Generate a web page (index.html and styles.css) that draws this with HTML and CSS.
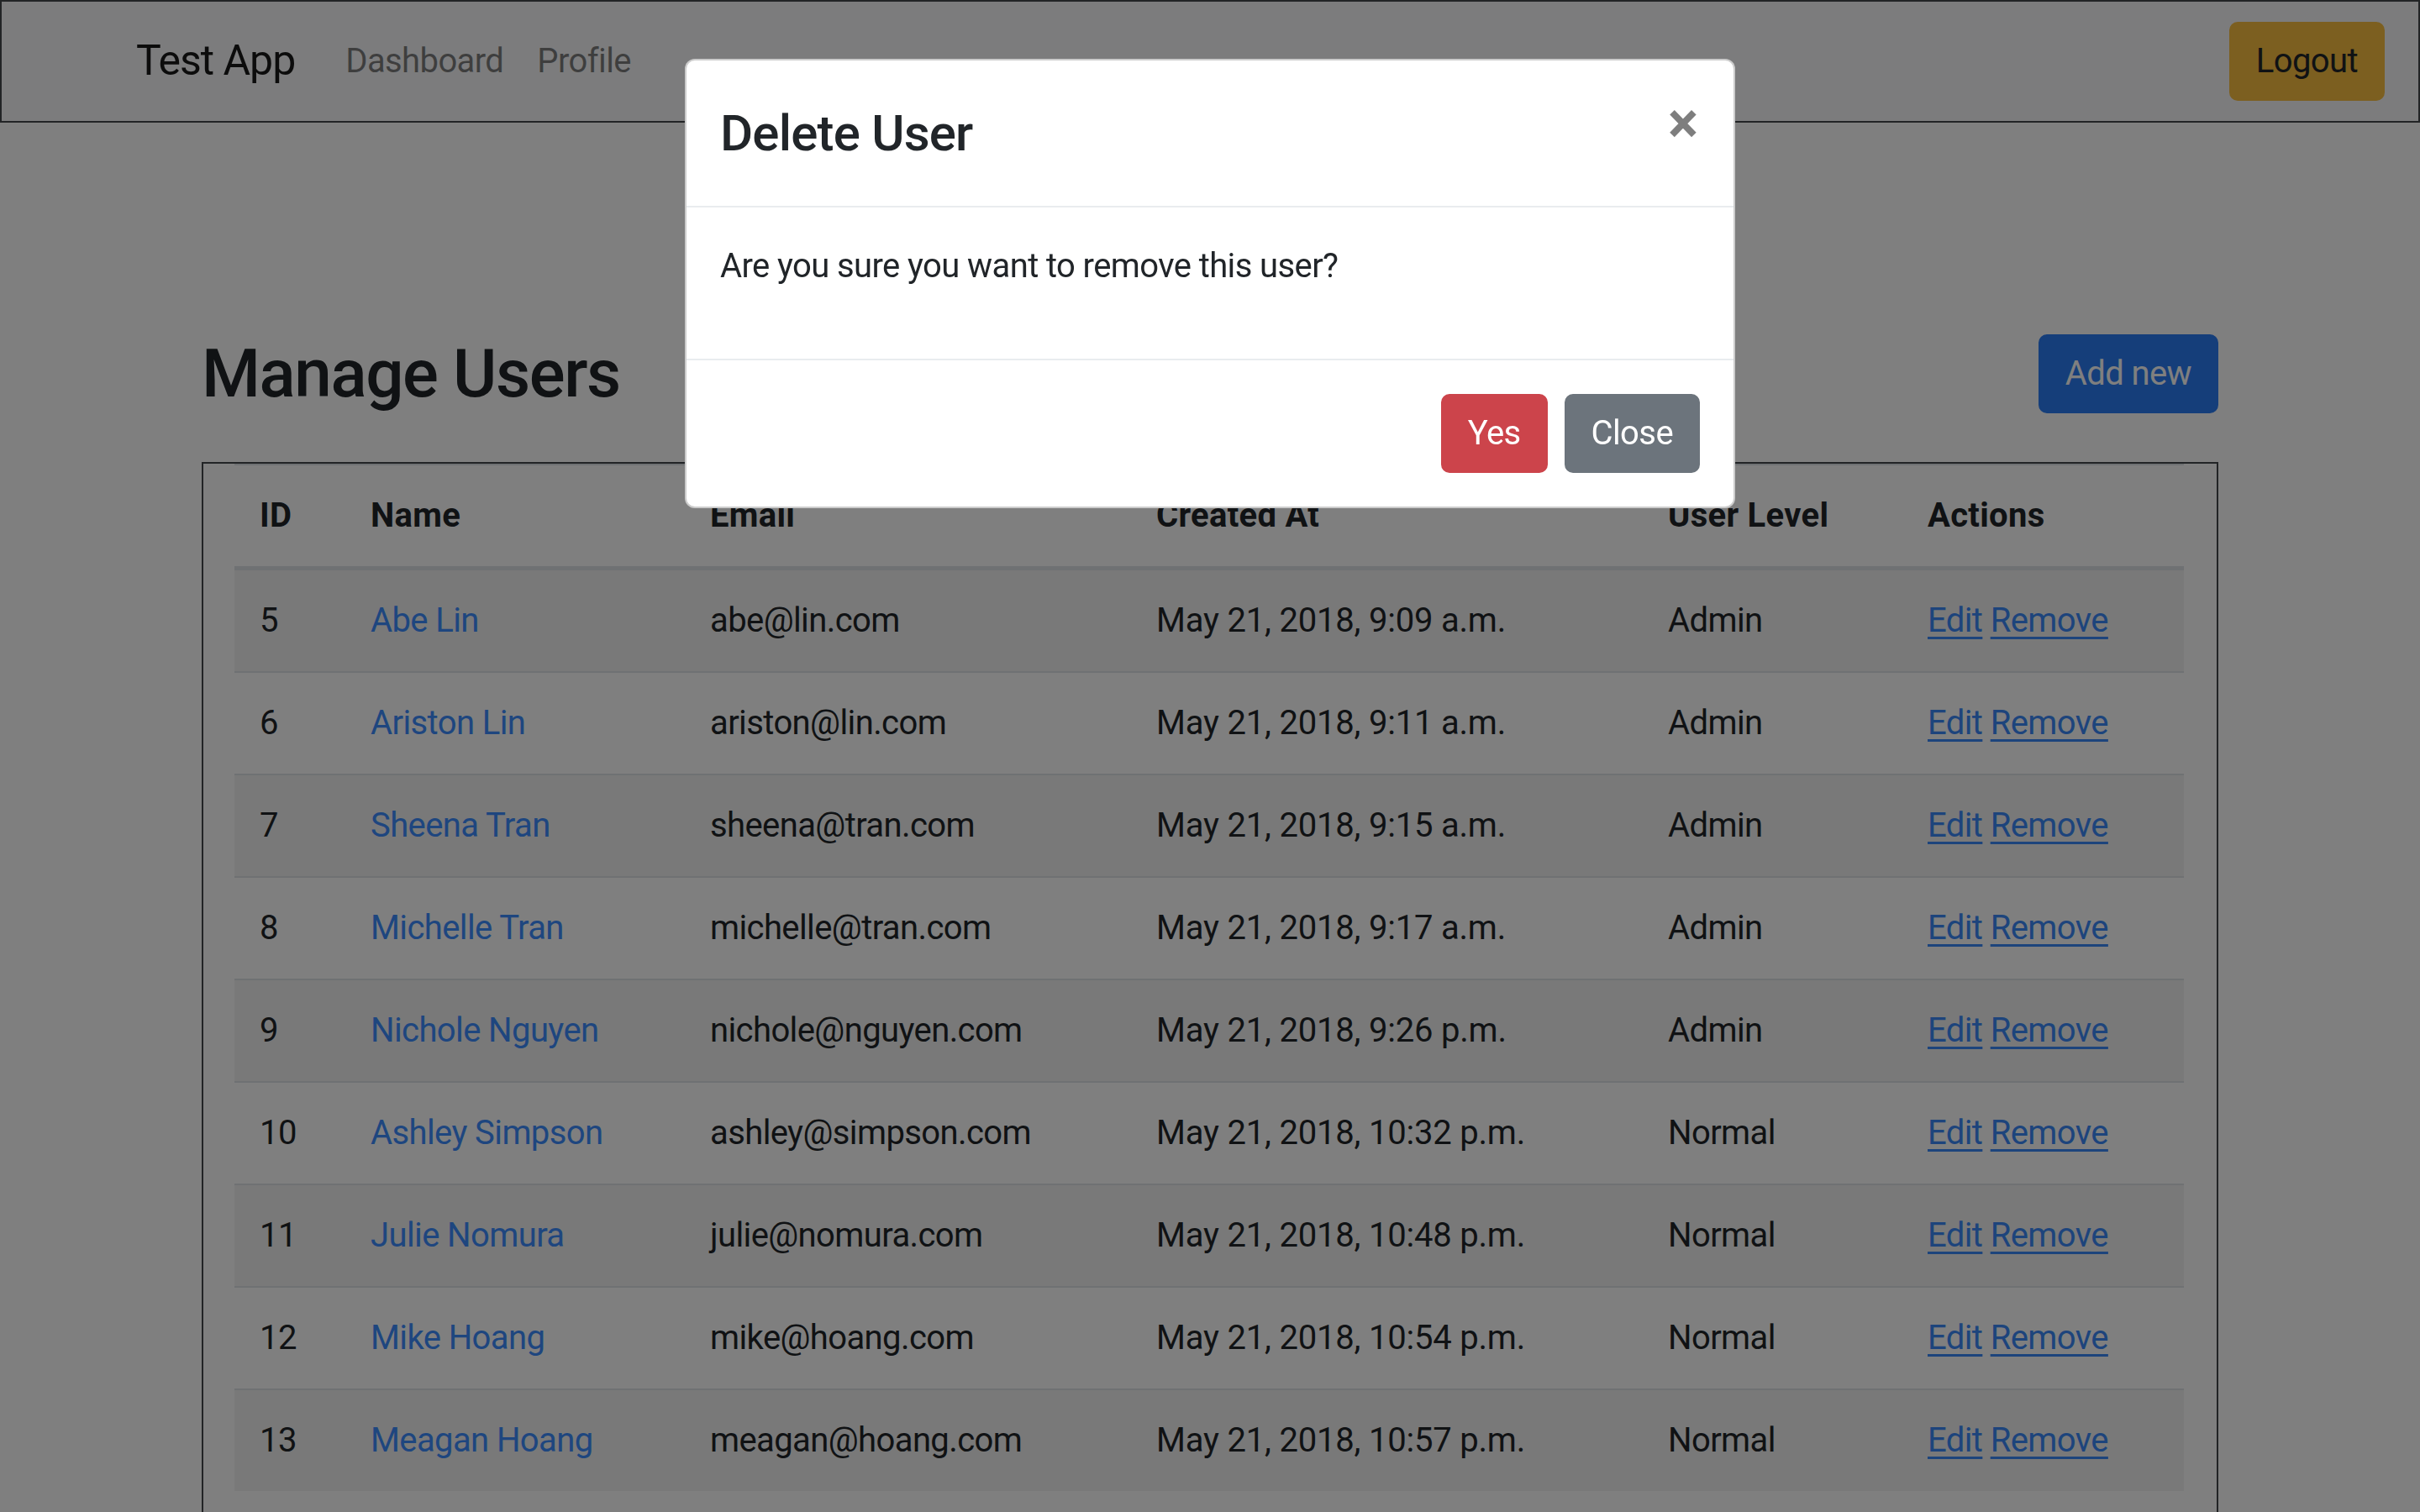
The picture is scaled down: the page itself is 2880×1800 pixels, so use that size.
FILE: index.html
```html
<!DOCTYPE html>
<html lang="en">
<head>
<meta charset="utf-8">
<title>Test App - Manage Users</title>
<link rel="stylesheet" href="styles.css">
</head>
<body class="modal-open">
  <nav class="navbar">
    <a class="navbar-brand" href="#">Test App</a>
    <ul class="navbar-nav">
      <li><a class="nav-link" href="#">Dashboard</a></li>
      <li><a class="nav-link" href="#">Profile</a></li>
    </ul>
    <button class="btn btn-warning logout" type="button">Logout</button>
  </nav>

  <main class="container">
    <div class="page-head">
      <h2 class="page-title">Manage Users</h2>
      <button class="btn btn-primary" type="button">Add new</button>
    </div>

    <div class="table-box">
      <table class="table">
        <colgroup>
          <col class="c-id"><col class="c-name"><col class="c-email"><col class="c-created"><col class="c-level"><col class="c-actions">
        </colgroup>
        <thead>
          <tr><th>ID</th><th>Name</th><th>Email</th><th>Created At</th><th>User Level</th><th>Actions</th></tr>
        </thead>
        <tbody>
          <tr><td>5</td><td><a class="name-link" href="#">Abe Lin</a></td><td>abe@lin.com</td><td class="date">May 21, 2018, 9:09 a.m.</td><td>Admin</td><td><a class="act" href="#">Edit</a> <a class="act" href="#">Remove</a></td></tr>
          <tr><td>6</td><td><a class="name-link" href="#">Ariston Lin</a></td><td>ariston@lin.com</td><td class="date">May 21, 2018, 9:11 a.m.</td><td>Admin</td><td><a class="act" href="#">Edit</a> <a class="act" href="#">Remove</a></td></tr>
          <tr><td>7</td><td><a class="name-link" href="#">Sheena Tran</a></td><td>sheena@tran.com</td><td class="date">May 21, 2018, 9:15 a.m.</td><td>Admin</td><td><a class="act" href="#">Edit</a> <a class="act" href="#">Remove</a></td></tr>
          <tr><td>8</td><td><a class="name-link" href="#">Michelle Tran</a></td><td>michelle@tran.com</td><td class="date">May 21, 2018, 9:17 a.m.</td><td>Admin</td><td><a class="act" href="#">Edit</a> <a class="act" href="#">Remove</a></td></tr>
          <tr><td>9</td><td><a class="name-link" href="#">Nichole Nguyen</a></td><td>nichole@nguyen.com</td><td class="date">May 21, 2018, 9:26 p.m.</td><td>Admin</td><td><a class="act" href="#">Edit</a> <a class="act" href="#">Remove</a></td></tr>
          <tr><td>10</td><td><a class="name-link" href="#">Ashley Simpson</a></td><td>ashley@simpson.com</td><td class="date">May 21, 2018, 10:32 p.m.</td><td>Normal</td><td><a class="act" href="#">Edit</a> <a class="act" href="#">Remove</a></td></tr>
          <tr><td>11</td><td><a class="name-link" href="#">Julie Nomura</a></td><td>julie@nomura.com</td><td class="date">May 21, 2018, 10:48 p.m.</td><td>Normal</td><td><a class="act" href="#">Edit</a> <a class="act" href="#">Remove</a></td></tr>
          <tr><td>12</td><td><a class="name-link" href="#">Mike Hoang</a></td><td>mike@hoang.com</td><td class="date">May 21, 2018, 10:54 p.m.</td><td>Normal</td><td><a class="act" href="#">Edit</a> <a class="act" href="#">Remove</a></td></tr>
          <tr><td>13</td><td><a class="name-link" href="#">Meagan Hoang</a></td><td>meagan@hoang.com</td><td class="date">May 21, 2018, 10:57 p.m.</td><td>Normal</td><td><a class="act" href="#">Edit</a> <a class="act" href="#">Remove</a></td></tr>
        </tbody>
      </table>
    </div>
  </main>

  <div class="modal-backdrop"></div>
  <div class="modal" role="dialog" aria-modal="true">
    <div class="modal-dialog">
      <div class="modal-content">
        <div class="modal-header">
          <h4 class="modal-title">Delete User</h4>
          <button class="close" type="button" aria-label="Close">&times;</button>
        </div>
        <div class="modal-body">
          <p>Are you sure you want to remove this user?</p>
        </div>
        <div class="modal-footer">
          <button class="btn btn-danger" type="button">Yes</button>
          <button class="btn btn-secondary" type="button">Close</button>
        </div>
      </div>
    </div>
  </div>
</body>
</html>
```

FILE: styles.css
```css
* { box-sizing: border-box; }

html, body { margin: 0; padding: 0; }

body {
  font-family: "Roboto", "Liberation Sans", sans-serif;
  font-size: 40px;
  line-height: 60px;
  letter-spacing: -0.6px;
  color: #212529;
  background: #ffffff;
}

.modal-open { overflow: hidden; height: 1800px; }

a { text-decoration: none; }

/* navbar */
.navbar {
  display: flex;
  align-items: center;
  padding: 20px 40px;
  background: #f8f9fa;
  border: 2px solid #44484d;
  height: 146px;
}
.navbar-brand {
  margin-left: 120px;
  margin-right: 40px;
  padding: 12px 0 13px;
  font-size: 50px;
  line-height: 75px;
  letter-spacing: -1px;
  color: rgba(0, 0, 0, 0.9);
}
.navbar-nav {
  display: flex;
  list-style: none;
  margin: 0;
  padding: 0;
}
.nav-link {
  display: block;
  padding: 20px;
  color: rgba(0, 0, 0, 0.5);
}
.logout { margin-left: auto; }

/* buttons */
.btn {
  display: inline-block;
  font-family: inherit;
  font-size: 40px;
  line-height: 60px;
  letter-spacing: -0.6px;
  font-weight: 400;
  padding: 15px 30px;
  border: 2px solid transparent;
  border-radius: 10px;
  cursor: pointer;
}
.btn-warning { background: #f8be40; border-color: #f8be40; color: #212529; }
.btn-primary { background: #2a7cf4; border-color: #2a7cf4; color: #ffffff; }
.btn-danger { background: #cc444b; border-color: #cc444b; color: #ffffff; }
.btn-secondary { background: #6c747c; border-color: #6c747c; color: #ffffff; }

/* page */
.container {
  width: 2400px;
  margin: 0 auto;
}
.page-head {
  display: flex;
  align-items: center;
  justify-content: space-between;
  margin: 251px 0 57px;
}
.page-title {
  margin: 0;
  font-size: 80px;
  line-height: 96px;
  font-weight: 500;
  letter-spacing: -1.4px;
}

.table-box {
  border: 2px solid #44484d;
  border-bottom: 0;
  padding: 0 39px 60px 37px;
}
.table {
  width: 100%;
  border-collapse: collapse;
  table-layout: fixed;
}
.c-id { width: 132px; }
.c-name { width: 404px; }
.c-email { width: 531px; }
.c-created { width: 609px; }
.c-level { width: 309px; }
.c-actions { width: 335px; }

.table th,
.table td {
  padding: 30px;
  text-align: left;
  vertical-align: top;
  border-top: 2px solid #dee2e6;
  white-space: nowrap;
}
.table thead th {
  vertical-align: bottom;
  font-weight: 700;
  letter-spacing: 0.3px;
  border-bottom: 5px solid #dee2e6;
}
.table td.date { letter-spacing: -0.2px; }
.table tbody tr:nth-of-type(odd) { background: rgba(0, 0, 0, 0.05); }

.name-link { color: #3c8cff; }
.act { color: #3a88f8; text-decoration: underline; text-decoration-thickness: 3px; text-underline-offset: 6px; }

/* modal */
.modal-backdrop {
  position: fixed;
  inset: 0;
  background: rgba(0, 0, 0, 0.5);
  z-index: 10;
}
.modal {
  position: fixed;
  inset: 0;
  z-index: 20;
}
.modal-dialog {
  width: 1250px;
  margin: 70px auto 0;
}
.modal-content {
  background: #ffffff;
  border: 2px solid rgba(0, 0, 0, 0.2);
  border-radius: 12px;
}
.modal-header {
  display: flex;
  align-items: flex-start;
  justify-content: space-between;
  padding: 40px;
  border-bottom: 2px solid #e9ecef;
}
.modal-title {
  margin: 0;
  font-size: 60px;
  line-height: 93px;
  font-weight: 500;
  letter-spacing: -0.8px;
}
.close {
  padding: 45px 42px 35px 40px;
  margin: -40px -40px -40px auto;
  background: transparent;
  border: 0;
  font-family: inherit;
  font-size: 68px;
  line-height: 60px;
  font-weight: 700;
  color: #000000;
  opacity: 0.5;
  cursor: pointer;
}
.modal-body {
  padding: 40px;
}
.modal-body p {
  margin: 0 0 40px;
}
.modal-footer {
  display: flex;
  align-items: center;
  justify-content: flex-end;
  gap: 20px;
  padding: 40px;
  border-top: 2px solid #e9ecef;
}
```
